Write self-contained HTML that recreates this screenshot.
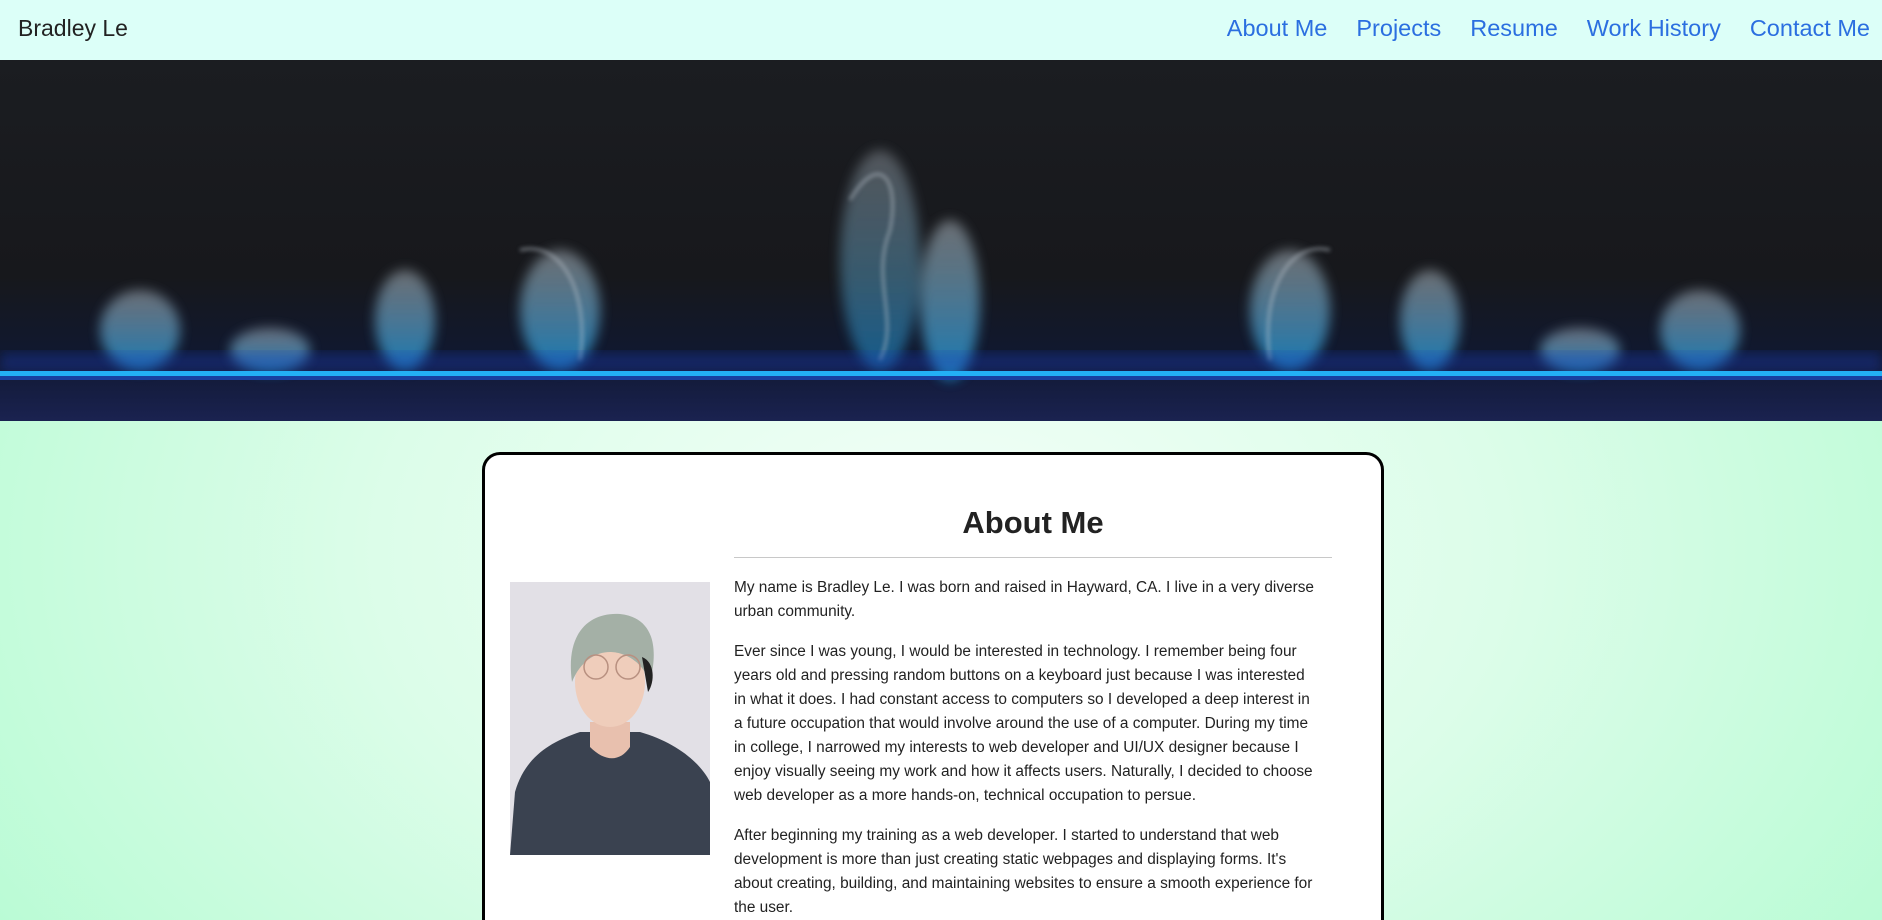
<!DOCTYPE html>
<html style="background:#c0fbd8;overflow:hidden;height:920px"><head><meta charset="utf-8"><style>
*{box-sizing:border-box;margin:0;padding:0}
body{position:relative;width:1882px;height:920px;overflow:hidden;font-family:"Liberation Sans",sans-serif;background:radial-gradient(ellipse 60% 80% at 50% 60%,#f3fff8 0%,#dcfde9 50%,#b8fbd4 100%)}
nav{height:60px;background:#dcfff8;position:relative}
.brand{position:absolute;left:18px;top:15px;font-size:23px;color:#222}
.links{position:absolute;right:12px;top:15px;font-size:23.5px;color:#2b6fe0}
.links span{margin-left:29px}
.banner{height:361px;position:relative;overflow:hidden;background:linear-gradient(#1b1d21 0%,#17181c 60%,#101830 82%,#1a2250 100%)}
.card{position:absolute;left:482px;top:452px;width:902px;height:600px;background:#fff;border:3px solid #000;border-radius:18px}
h1{position:absolute;left:734px;width:598px;top:505px;text-align:center;font-size:31px;font-weight:bold;color:#222}
.hr{position:absolute;left:734px;width:598px;top:557px;height:1px;background:#c8c8c8}
.text{position:absolute;left:734px;width:586px;top:576px;font-size:15.4px;line-height:24px;color:#222}
.text p{margin-bottom:16px}
.photo{position:absolute;left:510px;top:582px;width:200px;height:273px}
</style></head><body>
<nav><div class="brand">Bradley Le</div><div class="links"><span>About Me</span><span>Projects</span><span>Resume</span><span>Work History</span><span>Contact Me</span></div></nav>
<div class="banner">
<svg width="1882" height="361" style="position:absolute;left:0;top:0">
<defs><filter id="b"><feGaussianBlur stdDeviation="6"/></filter><filter id="b2"><feGaussianBlur stdDeviation="2"/></filter>
<linearGradient id="g" x1="0" y1="0" x2="0" y2="1"><stop offset="0" stop-color="#d0d8e0" stop-opacity=".6"/><stop offset="1" stop-color="#1aa8f0" stop-opacity=".9"/></linearGradient></defs>
<g filter="url(#b)" fill="url(#g)" opacity=".75">
<ellipse cx="140" cy="270" rx="40" ry="40"/><ellipse cx="270" cy="290" rx="40" ry="22"/><ellipse cx="405" cy="260" rx="30" ry="50"/><ellipse cx="560" cy="250" rx="40" ry="60"/>
<ellipse cx="880" cy="200" rx="40" ry="110" opacity=".7"/><ellipse cx="950" cy="240" rx="30" ry="80"/><ellipse cx="1290" cy="250" rx="40" ry="60"/><ellipse cx="1430" cy="260" rx="30" ry="50"/><ellipse cx="1580" cy="290" rx="40" ry="22"/><ellipse cx="1700" cy="270" rx="40" ry="40"/>
</g>
<g fill="none" stroke="#bfc8d0" stroke-width="3" opacity=".5" filter="url(#b2)"><path d="M850 140 C880 90 900 120 890 170 C870 220 900 260 880 300"/><path d="M520 190 C560 180 590 230 580 300"/><path d="M1330 190 C1290 180 1260 230 1270 300"/></g>
<rect x="0" y="292" width="1882" height="20" fill="#1a40c0" opacity=".35" filter="url(#b)"/>
<rect x="0" y="311" width="1882" height="5" fill="#23b0f5"/>
<rect x="0" y="316" width="1882" height="4" fill="#1840a0"/>
</svg></div>
<div class="card"></div>
<h1>About Me</h1><div class="hr"></div>
<svg class="photo" viewBox="0 0 200 273">
<rect width="200" height="273" fill="#e2e0e6"/>
<path d="M0 273 L5 210 C15 175 40 160 70 150 L130 150 C165 160 190 180 200 200 L200 273Z" fill="#3a4250"/>
<path d="M80 140 L80 165 C95 180 110 180 120 165 L120 140Z" fill="#e8c0ae"/>
<ellipse cx="100" cy="100" rx="35" ry="45" fill="#efcdbb"/>
<path d="M62 100 C55 50 80 30 110 32 C140 35 150 60 140 100 C130 75 110 70 100 70 C85 70 70 80 62 100Z" fill="#a4b0a6"/>
<path d="M132 75 C145 80 145 100 138 110Z" fill="#222"/>
<circle cx="86" cy="85" r="12" fill="none" stroke="#b89080" stroke-width="1.5"/><circle cx="118" cy="85" r="12" fill="none" stroke="#b89080" stroke-width="1.5"/>
</svg>
<div class="text">
<p>My name is Bradley Le. I was born and raised in Hayward, CA. I live in a very diverse urban community.</p>
<p>Ever since I was young, I would be interested in technology. I remember being four years old and pressing random buttons on a keyboard just because I was interested in what it does. I had constant access to computers so I developed a deep interest in a future occupation that would involve around the use of a computer. During my time in college, I narrowed my interests to web developer and UI/UX designer because I enjoy visually seeing my work and how it affects users. Naturally, I decided to choose web developer as a more hands-on, technical occupation to persue.</p>
<p>After beginning my training as a web developer. I started to understand that web development is more than just creating static webpages and displaying forms. It's about creating, building, and maintaining websites to ensure a smooth experience for the user.</p>
</div>
</body></html>
